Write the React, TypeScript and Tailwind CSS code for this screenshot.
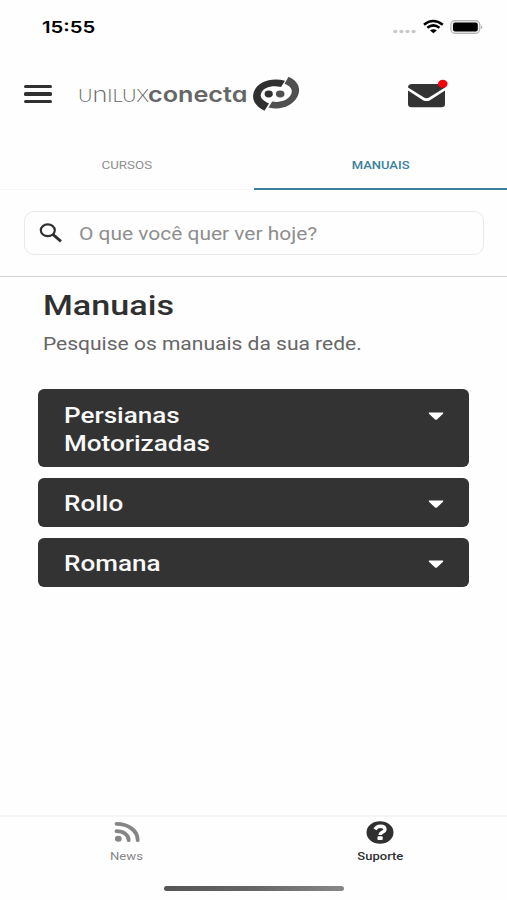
import React from 'react';

const manuals = [
  { lines: ['Persianas', 'Motorizadas'], height: 'h-[77.5px]' },
  { lines: ['Rollo'], height: 'h-[49.5px]' },
  { lines: ['Romana'], height: 'h-[49.5px]' },
];

function StatusBar() {
  return (
    <div className="flex h-[54px] items-center justify-between pl-[42px] pr-[24px]">
      <span className="origin-left scale-x-[1.23] font-[Inter,sans-serif] text-[16.5px] font-semibold leading-5 text-black">15:55</span>
      <svg width="92" height="20" viewBox="0 0 92 20" className="block">
        <g fill="#c9c9c9">
          <ellipse cx="4.3" cy="14.5" rx="2.1" ry="1.8" />
          <ellipse cx="10.4" cy="14.5" rx="2.1" ry="1.8" />
          <ellipse cx="16.5" cy="14.5" rx="2.1" ry="1.8" />
          <ellipse cx="22.6" cy="14.5" rx="2.1" ry="1.8" />
        </g>
        <g fill="none" stroke="#000" strokeWidth="2.5">
          <path d="M33 7.8 Q42 .2 51.8 7.8" />
          <path d="M36.3 10.8 Q42.3 6 48.5 10.8" />
        </g>
        <path d="M39 13.4 Q42.4 11 45.8 13.4 L42.4 16.2Z" fill="#000" />
        <rect x="59.8" y="3.6" width="29" height="12.8" rx="4.2" fill="#eee" stroke="#b4b4b4" strokeWidth="1.2" />
        <rect x="62" y="5.5" width="24.8" height="9" rx="2.2" fill="#000" />
        <path d="M90.2 8.3 Q92.2 10.1 90.2 12Z" fill="#999" />
      </svg>
    </div>
  );
}

function Brand() {
  return (
    <div className="flex h-[46px] w-[224px] items-center text-[#666]">
      <div className="flex h-7 w-[70px] items-baseline">
        <span className="-mt-px flex origin-left scale-x-[1.14] items-baseline font-[Lato,sans-serif] text-[17.5px] font-light leading-7 text-[#666]">
          <span>U</span><span className="text-[23.5px]">n</span><span>ILUX</span>
        </span>
      </div>
      <div className="flex h-7 w-[100px] items-baseline">
        <span className="origin-left scale-x-[1.145] font-[Inter,sans-serif] text-[22px] font-semibold leading-7 [font-feature-settings:'cv11']">conecta</span>
      </div>
      <svg width="52" height="40" viewBox="0 0 52 40" className="block shrink-0">
        <path d="M16.5 36.7 C7.5 32.5 3 25.5 6 17.5 C10 7.5 24 3.2 37 6.8 L33 13 C24 11 15.5 13.5 13.2 19 C11.5 23 14 26.5 21 29.5Z" fill="#303030" />
        <path d="M40.5 2.8 C50 7 53.5 14.5 49.5 22.5 C44.5 32 33 36.5 20.5 33.5 L24.2 27.5 C32 29 40.5 26 43 20.5 C45 16.2 43.5 12.5 36.5 9.7Z" fill="#505050" />
        <ellipse cx="20.7" cy="20" rx="4.1" ry="3.4" fill="#303030" />
        <ellipse cx="32.2" cy="20" rx="4.3" ry="3.4" fill="#505050" />
      </svg>
    </div>
  );
}

function Header() {
  return (
    <header className="flex h-[86px] items-center pl-6 pb-[6px]">
      <div className="flex w-[28px] flex-col gap-[3.8px]">
        <span className="h-[3.8px] rounded-[1.5px] bg-[#303030]" />
        <span className="h-[3.8px] rounded-[1.5px] bg-[#303030]" />
        <span className="h-[3.8px] rounded-[1.5px] bg-[#303030]" />
      </div>
      <div className="ml-[26px]"><Brand /></div>
      <svg width="44" height="32" viewBox="0 0 44 32" className="ml-[104px] block">
        <path d="M2 9.5 Q2 6 6 6 H35 Q39 6 39 9.5 L23 19.6 Q20.5 21 18 19.6Z" fill="#333" />
        <path d="M2 12.5 L17 22.2 Q20.5 24 24 22.2 L39 12.5 V26 Q39 29.2 35.5 29.2 H5.5 Q2 29.2 2 26Z" fill="#333" />
        <ellipse cx="36.8" cy="5.8" rx="4.8" ry="4" fill="#f4050b" />
      </svg>
    </header>
  );
}

function Tabs() {
  return (
    <nav className="grid h-[50px] grid-cols-2 font-[Roboto,sans-serif] text-[11.5px] leading-[50px]">
      <div className="flex h-[50px] justify-center border-b border-[#f6f6f6] text-[#8e8e8e]"><span className="scale-x-[1.16]">CURSOS</span></div>
      <div className="flex h-[50px] justify-center border-b-[2px] border-[#3c809c] text-[#3c809c]"><span className="scale-x-[1.13] font-medium">MANUAIS</span></div>
    </nav>
  );
}

function Search() {
  return (
    <div className="h-[87px] border-b border-[#d2d2d2] px-6 pt-[21px]">
      <div className="flex h-[44px] w-[460px] items-center rounded-[10px] border border-[#e9e9e9] pl-[14px]">
        <svg width="24" height="20" viewBox="0 0 24 20" fill="none" stroke="#303030" className="block">
          <ellipse cx="8.8" cy="7.3" rx="7" ry="5.9" strokeWidth="2.2" />
          <path d="M13.8 11.4 L22 18.4" strokeWidth="2.8" />
        </svg>
        <span className="ml-[16px] origin-left scale-x-[1.163] whitespace-nowrap pt-px font-[Roboto,sans-serif] text-[18px] text-[#8e8e8e]">O que você quer ver hoje?</span>
      </div>
    </div>
  );
}

function Manuals() {
  return (
    <main className="h-[538px] font-[Roboto,sans-serif]">
      <div className="flex flex-col items-start pl-[43px] pt-[13px]">
        <h1 className="origin-left scale-x-[1.22] text-[28px] font-medium leading-8 text-[#303030]">Manuais</h1>
        <p className="mt-[10px] origin-left scale-x-[1.167] whitespace-nowrap text-[18px] leading-6 text-[#666]">Pesquise os manuais da sua rede.</p>
      </div>
      <div className="ml-[38.4px] mt-[33.4px] flex w-[431px] flex-col gap-[10.8px]">
        {manuals.map((m) => (
          <button key={m.lines[0]} className={`flex ${m.height} items-start justify-between rounded-[6px] bg-[#333] pl-[26px] pr-[25px] pt-[12.3px] text-left`}>
            <span className="origin-left scale-x-[1.185] text-[22px] font-medium leading-[28.5px] text-[#f8f8f8]">
              {m.lines.map((line) => <span key={line} className="block">{line}</span>)}
            </span>
            <svg width="16" height="9" viewBox="0 0 16 9" className="mt-[10px] block">
              <path d="M1 .5 H15 Q15.8 1 15 1.8 L9 7.4 Q8 8.2 7 7.4 L1 1.8 Q.2 1 1 .5Z" fill="#fff" />
            </svg>
          </button>
        ))}
      </div>
    </main>
  );
}

function BottomNav() {
  return (
    <footer className="h-[85px] border-t-2 border-[#f5f5f5] font-[Roboto,sans-serif] text-[11.5px] leading-4">
      <div className="grid grid-cols-2 pt-1">
        <div className="flex flex-col items-center text-[#858585]">
          <svg width="26" height="22" viewBox="0 0 26 22" fill="none" stroke="#858585" strokeWidth="3.8" className="block">
            <ellipse cx="4.3" cy="17.8" rx="3.4" ry="3" fill="#858585" stroke="none" />
            <path d="M2.5 10.2 C9.5 10.2 14.7 13.8 14.7 19.2" strokeLinecap="round" />
            <path d="M2.5 2.8 C14 2.8 23.7 9.5 23.7 19.2" strokeLinecap="round" />
          </svg>
          <span className="mt-[5px] scale-x-[1.14]">News</span>
        </div>
        <div className="flex flex-col items-center text-[#303030]">
          <svg width="28" height="23" viewBox="0 0 28 23" className="block">
            <ellipse cx="14" cy="11.5" rx="13.5" ry="11.2" fill="#303030" />
            <path d="M9 8.4 Q10.8 5.2 14.3 5.2 Q19 5.2 19 8.5 C19 11.2 14.2 10.8 14.2 14" fill="none" stroke="#fff" strokeWidth="3.4" />
            <rect x="11.5" y="15.2" width="5.2" height="3.9" rx="1.2" fill="#fff" />
          </svg>
          <span className="mt-[4px] scale-x-[1.13] font-medium">Suporte</span>
        </div>
      </div>
      <div className="mx-auto mt-[22px] h-[5px] w-[180px] rounded-full bg-linear-to-r from-[#555] via-[#666] to-[#888]" />
    </footer>
  );
}

export default function App() {
  return (
    <div className="h-[900px] w-[507px] overflow-hidden bg-[#fefefe]">
      <StatusBar />
      <Header />
      <Tabs />
      <Search />
      <Manuals />
      <BottomNav />
    </div>
  );
}
